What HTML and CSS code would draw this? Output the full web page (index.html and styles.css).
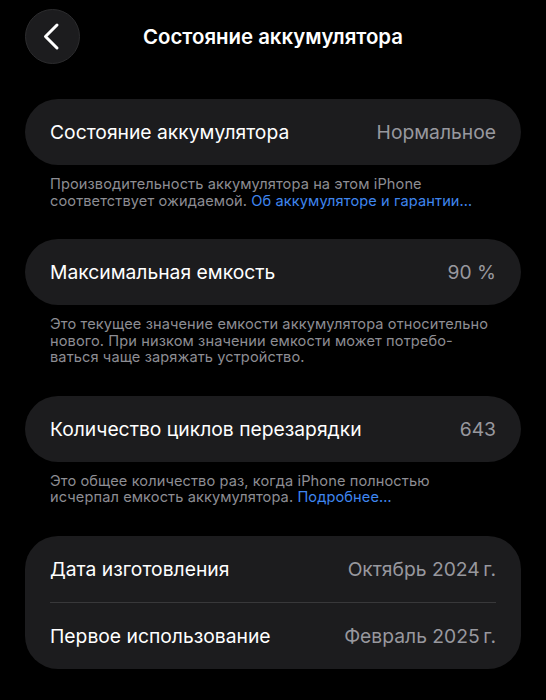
FILE: index.html
```html
<!DOCTYPE html>
<html lang="ru">
<head>
<meta charset="utf-8">
<title>Состояние аккумулятора</title>
<link rel="stylesheet" href="styles.css">
</head>
<body>
<header class="nav">
  <div class="nav-left">
    <button class="back" aria-label="Назад">
      <svg width="55" height="55" viewBox="0 0 55 55"><path d="M32 16 L20.5 27.5 L32 39" fill="none" stroke="#fff" stroke-width="3" stroke-linecap="round" stroke-linejoin="round"/></svg>
    </button>
  </div>
  <h1 class="title">Состояние аккумулятора</h1>
  <div class="nav-right"></div>
</header>
<main class="content">
  <section class="group">
    <div class="card">
      <div class="row"><span class="label">Состояние аккумулятора</span><span class="value">Нормальное</span></div>
    </div>
    <p class="note">Производительность аккумулятора на этом iPhone<br>соответствует ожидаемой. <a class="link" href="#">Об аккумуляторе и гарантии…</a></p>
  </section>
  <section class="group">
    <div class="card">
      <div class="row"><span class="label">Максимальная емкость</span><span class="value">90 %</span></div>
    </div>
    <p class="note">Это текущее значение емкости аккумулятора относительно<br>нового. При низком значении емкости может потребо-<br>ваться чаще заряжать устройство.</p>
  </section>
  <section class="group">
    <div class="card">
      <div class="row"><span class="label">Количество циклов перезарядки</span><span class="value">643</span></div>
    </div>
    <p class="note">Это общее количество раз, когда iPhone полностью<br>исчерпал емкость аккумулятора. <a class="link" href="#">Подробнее…</a></p>
  </section>
  <section class="group">
    <div class="card">
      <div class="row"><span class="label">Дата изготовления</span><span class="value">Октябрь 2024&#8201;г.</span></div>
      <div class="sep"></div>
      <div class="row"><span class="label">Первое использование</span><span class="value">Февраль 2025&#8201;г.</span></div>
    </div>
  </section>
</main>
</body>
</html>
```
FILE: styles.css
```css
html, body {
  margin: 0;
  padding: 0;
  background: #000;
}
body {
  font-family: Inter, "Noto Sans", "DejaVu Sans", sans-serif;
  color: #fff;
  width: 546px;
  -webkit-font-smoothing: antialiased;
}
.nav {
  display: grid;
  grid-template-columns: 1fr auto 1fr;
  align-items: center;
  padding: 9px 25px 0;
  height: 55px;
}
.back {
  width: 55px;
  height: 55px;
  padding: 0;
  margin: 0;
  border-radius: 50%;
  background: #1c1c1e;
  border: 1px solid #2c2c2e;
  display: flex;
  align-items: center;
  justify-content: center;
  box-sizing: border-box;
}
.back svg {
  display: block;
  flex: none;
}
.title {
  margin: 0;
  font-size: 20.4px;
  font-weight: 600;
  letter-spacing: 0;
  color: #fff;
}
.content {
  padding: 35px 25px 0;
}
.group {
  margin-bottom: 30px;
}
.card {
  background: #1c1c1e;
  border-radius: 33px;
  padding: 0 25px;
}
.row {
  height: 66px;
  display: flex;
  align-items: center;
  justify-content: space-between;
  font-size: 19.3px;
  letter-spacing: 0;
}
.label {
  color: #fff;
}
.value {
  color: #98989e;
}
.sep {
  height: 1px;
  background: #38383a;
}
.note {
  margin: 0;
  padding: 11px 25px 0;
  font-size: 14.6px;
  line-height: 16.5px;
  letter-spacing: 0.1px;
  color: #8d8d93;
  white-space: nowrap;
}
.link {
  color: #3f86ef;
  text-decoration: none;
}
```
